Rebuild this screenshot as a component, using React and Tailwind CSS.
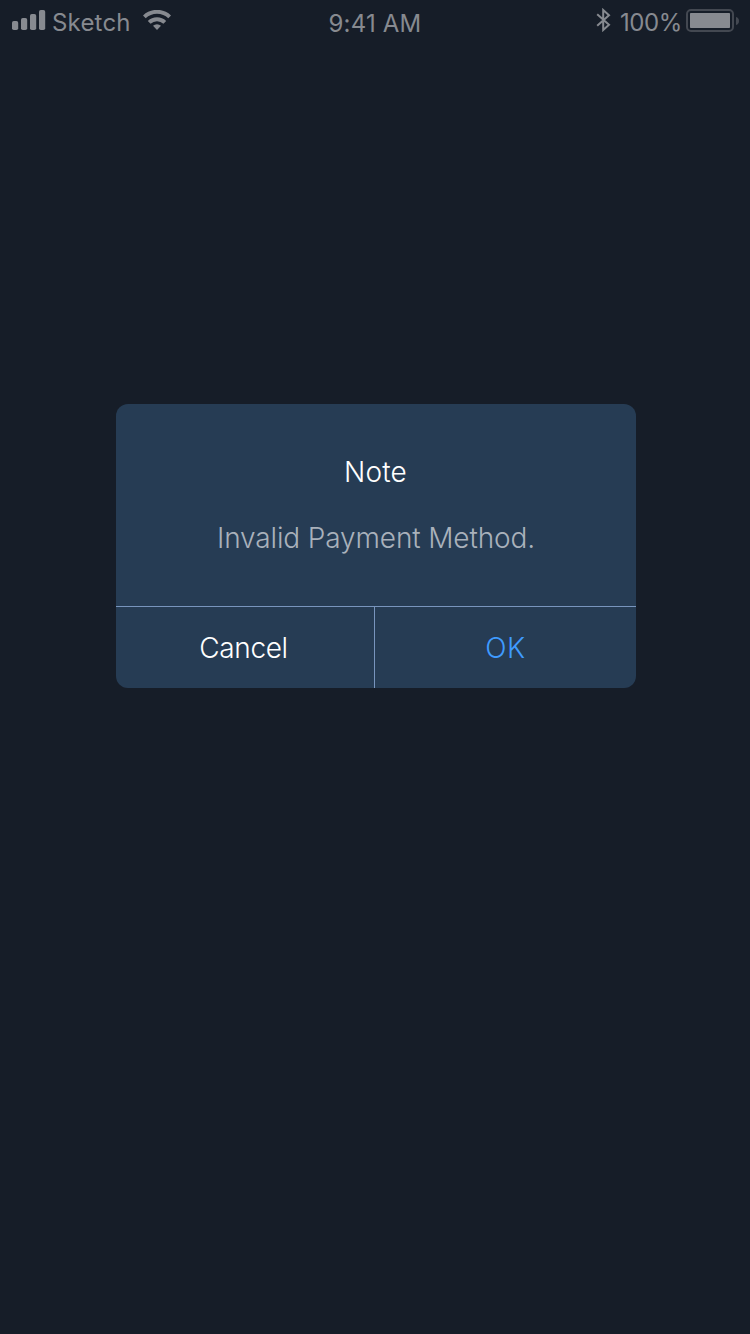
function Signal() {
  return (
    <svg className="block h-5 w-[34px]" viewBox="0 0 34 20" fill="#878a90">
      <rect x="0" y="11" width="6.2" height="9" rx="1.8" />
      <rect x="9" y="8" width="6.2" height="12" rx="1.8" />
      <rect x="18" y="4" width="6.2" height="16" rx="1.8" />
      <rect x="27" y="0" width="6.2" height="20" rx="1.8" />
    </svg>
  );
}

function Wifi() {
  return (
    <svg className="block h-5 w-7" viewBox="0 0 28 20" fill="none" stroke="#878a90" strokeWidth="4">
      <path d="M1.3 6.900A18.4 18.4 0 0 1 26.7 6.900" />
      <path d="M6.2 12.4A11.200 11.200 0 0 1 21.8 12.4" />
      <path d="M14 20l-4-4.200a5.800 5.800 0 0 1 8 0z" fill="#878a90" stroke="none" />
    </svg>
  );
}

function Bluetooth() {
  return (
    <svg className="block h-6 w-4" viewBox="0 0 16 24" fill="none" stroke="#878a90" strokeWidth="2">
      <path d="M1.2 6.300L13 16.800L7.200 22V2L13 7.200L1.200 17.700" />
    </svg>
  );
}

function Battery() {
  return (
    <svg className="block h-6 w-[54px]" viewBox="0 0 54 24">
      <rect x="1" y="1" width="46" height="21" rx="4" fill="none" stroke="#434851" strokeWidth="2" />
      <rect x="4" y="4" width="40" height="15" rx="0.8" fill="#878a90" />
      <path d="M50 8c2 .6 3 2 3 4s-1 3.400-3 4z" fill="#434851" />
    </svg>
  );
}

export default function App() {
  return (
    <main className="flex h-[1334px] w-[750px] flex-col bg-[#161d28] font-['Inter',sans-serif]">
      <header className="grid h-10 grid-cols-3 items-start text-[24px] leading-7 text-[#878a90]">
        <div className="flex pl-3">
          <div className="pt-2.5"><Signal /></div>
          <span className="w-[97px] pt-[9px] pl-1.5 tracking-[0.2px]">Sketch</span>
          <div className="pt-2.5"><Wifi /></div>
        </div>
        <div className="pt-2.5 text-center tracking-[0.2px]">9:41 AM</div>
        <div className="flex justify-end pr-[10px]">
          <div className="pt-2"><Bluetooth /></div>
          <span className="w-[74px] pt-[9px] pl-2 tracking-[-0.4px]">100%</span>
          <div className="pt-[9px]"><Battery /></div>
        </div>
      </header>
      <section className="mt-[364px] ml-[116px] flex h-[284px] w-[520px] flex-col overflow-hidden rounded-xl bg-[#263c54] text-[28px] leading-9 font-light">
        <div className="flex h-[202px] flex-col items-center pt-[50px]">
          <h1 className="pr-px tracking-[0.2px] text-white">Note</h1>
          <p className="mt-[30px] tracking-[-0.13px] text-[#a9b1bb]">Invalid Payment Method.</p>
        </div>
        <div className="flex h-[82px] border-t border-[#7895bd]">
          <button className="w-[259px] border-r border-[#7895bd] pt-px pr-[3px] tracking-[-0.4px] text-white">Cancel</button>
          <button className="flex-1 pt-px tracking-[0.6px] text-[#3f9bff]">OK</button>
        </div>
      </section>
    </main>
  );
}
